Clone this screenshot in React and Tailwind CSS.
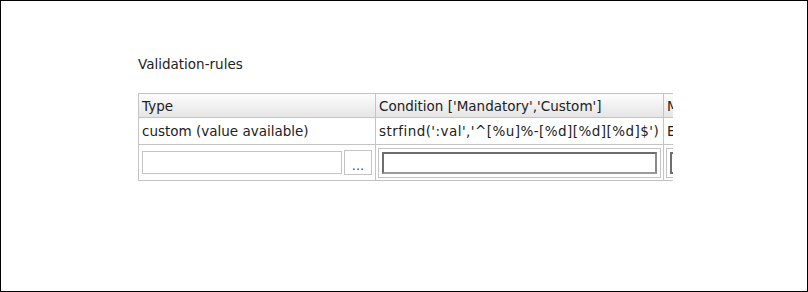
import React from "react";

const cols = [
  { key: "type", title: "Type", width: 237 },
  { key: "cond", title: "Condition ['Mandatory','Custom']", width: 288 },
  { key: "msg", title: "Message", width: 200 },
];

const rules = [
  {
    type: "custom (value available)",
    cond: "strfind(':val','^[%u]%-[%d][%d][%d]$')",
    msg: "Error: invalid format",
  },
];

export default function App() {
  return (
    <div
      className="w-[808px] h-[292px] border border-black bg-white text-[#222] overflow-hidden"
      style={{ fontFamily: "'DejaVu Sans', Verdana, sans-serif" }}
    >
      <div className="pl-[137px] pt-[53px]">
        <h3 className="text-[13.5px] leading-[20px]">Validation-rules</h3>

        <div className="mt-[19px] w-[535px] overflow-hidden">
          <table className="table-fixed border-collapse w-[725px] text-[13.5px]">
            <colgroup>
              {cols.map((c) => (
                <col key={c.key} style={{ width: c.width }} />
              ))}
            </colgroup>
            <thead>
              <tr className="h-[24px] bg-gradient-to-b from-[#fdfdfd] to-[#e4e4e4]">
                {cols.map((c) => (
                  <th
                    key={c.key}
                    className="border border-[#c4c4c4] px-[3px] text-left font-normal whitespace-nowrap leading-[20px]"
                  >
                    {c.title}
                  </th>
                ))}
              </tr>
            </thead>
            <tbody>
              {rules.map((r, i) => (
                <tr key={i} className="h-[27px]">
                  <td className="border border-[#c4c4c4] px-[3px] whitespace-nowrap overflow-hidden leading-[20px]">
                    {r.type}
                  </td>
                  {/* condition renders a bit wider in the original font */}
                  <td className="border border-[#c4c4c4] px-[3px] whitespace-nowrap overflow-hidden leading-[20px] tracking-[0.45px]">
                    {r.cond}
                  </td>
                  <td className="border border-[#c4c4c4] px-[3px] whitespace-nowrap overflow-hidden leading-[20px]">
                    {r.msg}
                  </td>
                </tr>
              ))}

              {/* new rule row */}
              <tr className="h-[36px]">
                <td className="border border-[#c4c4c4] px-[3px]">
                  <div className="flex items-center gap-[2px]">
                    <input className="w-[201px] h-[23px] border border-[#c4c4c4] bg-white outline-none" />
                    <button className="w-[28px] h-[25px] border border-[#c4c4c4] bg-white text-[13px] leading-none pt-[5px] text-[#444]">
                      ...
                    </button>
                  </div>
                </td>
                <td className="border border-[#c4c4c4] px-[2px]">
                  <div className="border border-[#c4c4c4] p-[3px]">
                    <input className="block w-full h-[22px] border-2 border-[#6d6d6d] border-r-[#8a8a8a] border-b-[#9a9a9a] bg-white outline-none" />
                  </div>
                </td>
                <td className="border border-[#c4c4c4] px-[2px]">
                  <div className="border border-[#c4c4c4] p-[3px]">
                    <input className="block w-full h-[22px] border-2 border-[#6d6d6d] bg-white outline-none" />
                  </div>
                </td>
              </tr>
            </tbody>
          </table>
        </div>
      </div>
    </div>
  );
}
